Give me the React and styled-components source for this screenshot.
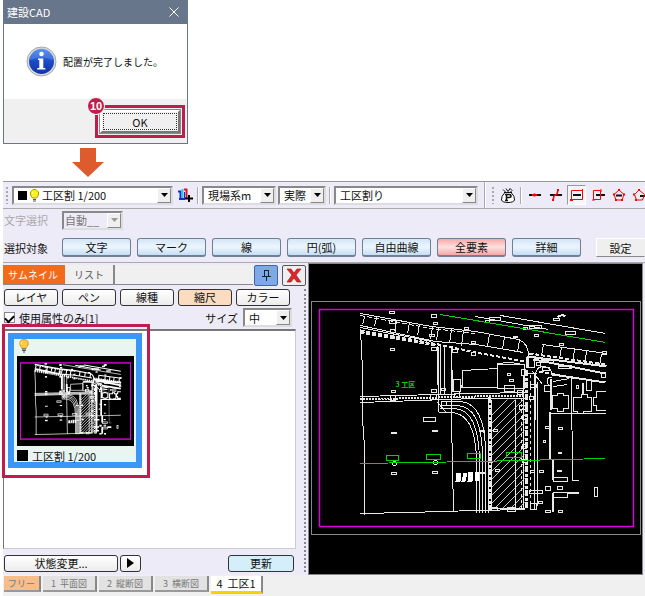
import styled, { createGlobalStyle } from "styled-components";

const GlobalStyle = createGlobalStyle`
  * {
    box-sizing: border-box;
  }
  body {
    margin: 0;
    background: #fff;
  }
  body, button, select, input {
    font-family: "Noto Sans CJK JP", "Liberation Sans", sans-serif;
    font-size: 11px;
    line-height: 14px;
    color: #111;
  }
`;

const Page = styled.main`
  display: flex;
  flex-direction: column;
  min-height: 100vh;
  padding-left: 3px;
  overflow: hidden;
`;

// Dialog
const Dialog = styled.section`
  width: 185px;
  border: 1px solid #67768a;
  border-top: 0;
  background: #fff;
`;

const TitleBar = styled.header`
  display: flex;
  align-items: center;
  justify-content: space-between;
  height: 24px;
  padding: 0 8px 0 3px;
  background: #67768a;
  color: #fff;
`;

const Title = styled.h1`
  margin: 0;
  font-size: 11px;
  font-weight: 400;
`;

const CloseButton = styled.button`
  display: flex;
  padding: 0;
  border: 0;
  background: none;
`;

const Message = styled.div`
  display: flex;
  align-items: center;
  gap: 6px;
  height: 75px;
  padding-left: 22px;
  font-size: 10px;
`;

const DialogFooter = styled.footer`
  display: flex;
  justify-content: flex-end;
  height: 44px;
  padding: 6px 2px 0 0;
  background: #f0f0f0;
`;

const Callout = styled.div`
  position: relative;
  width: 90px;
  height: 33px;
  padding: 2px;
  border: 3px solid #be1e4b;
`;

const StepBadge = styled.span`
  position: absolute;
  left: -11px;
  top: -11px;
  width: 18px;
  height: 18px;
  border: 1px solid #fff;
  border-radius: 50%;
  background: #be1e4b;
  color: #fff;
  font: bold 11px/16px "Liberation Sans", sans-serif;
  text-align: center;
`;

const OkButton = styled.button`
  width: 100%;
  height: 100%;
  padding: 0;
  border: 2px solid;
  border-color: #fff #777 #777 #fff;
  background: #f0f0f0;
  line-height: 12px;
  outline: 1px dotted #333;
  outline-offset: -4px;
  box-shadow: 0 0 0 1px #8a8a8a;
`;

const Arrow = styled.svg`
  display: block;
  margin: 4px 0 4px 69px;
`;

// Application window
const Window = styled.section`
  display: flex;
  flex: 1;
  flex-direction: column;
  border-top: 1px solid #999;
  background: #eeebf8;
`;

const Toolbar = styled.div`
  display: flex;
  align-items: center;
  height: 27px;
  padding-left: 3px;
  gap: 2px;
  border-bottom: 1px solid #aaa;
  overflow: hidden;
`;

const Grip = styled.span`
  flex: none;
  width: 2px;
  height: 17px;
  margin-right: 2px;
  background: repeating-linear-gradient(#aaa 0 2px, transparent 2px 4px);
`;

const Divider = styled.span`
  flex: none;
  width: 2px;
  height: ${(p) => (p.$tall ? "27px" : "17px")};
  margin: 0 ${(p) => (p.$tall ? "4px" : "1px")};
  border-left: 1px solid #aaa;
  border-right: 1px solid #fff;
`;

const ComboBox = styled.span`
  display: flex;
  flex: none;
  align-items: center;
  gap: 3px;
  position: relative;
  width: ${(p) => p.$width}px;
  height: 19px;
  padding-left: ${(p) => (p.$disabled ? 1 : 4)}px;
  border: 2px solid;
  border-color: #888 #ddd #ddd #888;
  background: ${(p) => (p.$disabled ? "#eeebf8" : "#fff")};
`;

const ComboSelect = styled.select`
  flex: 1;
  min-width: 0;
  height: 100%;
  padding: 0;
  border: 0;
  appearance: none;
  background: transparent;
  color: ${(p) => (p.disabled ? "#777" : "#111")};
  opacity: 1;
`;

const ComboArrow = styled.span`
  position: absolute;
  top: 0;
  right: 0;
  bottom: 0;
  display: flex;
  align-items: center;
  justify-content: center;
  width: 14px;
  border: 1px solid;
  border-color: #fff #888 #888 #fff;
  background: #efefef;
  pointer-events: none;
`;

const ToolButton = styled.button`
  display: flex;
  flex: none;
  align-items: center;
  justify-content: center;
  width: 19px;
  height: 20px;
  padding: 0;
  border: 1px solid;
  border-color: ${(p) => (p.$pressed ? "#999 #fff #fff #999" : "transparent")};
  background: ${(p) => (p.$pressed ? "#f6f5fb" : "none")};
`;

const OptionRow = styled.div`
  display: flex;
  align-items: center;
  height: 22px;
  padding-left: 1px;
`;

const RowLabel = styled.label`
  width: 58px;
  color: ${(p) => (p.$muted ? "#aaa" : "#111")};
`;

const TargetRow = styled.div`
  display: flex;
  align-items: center;
  height: 31px;
  padding: 2px 0 0 1px;
  overflow: hidden;
`;

const TargetList = styled.div`
  display: flex;
  flex: 1;
  gap: 6px;
`;

const TargetButton = styled.button`
  flex: none;
  width: 69px;
  height: 19px;
  padding: 0;
  border: 1px solid #6f7f94;
  border-bottom-width: 2px;
  border-radius: 3px;
  background: ${(p) =>
    p.$active
      ? "linear-gradient(#f8a9a9, #fde0e0 50%, #f7a6a6)"
      : "linear-gradient(#d3e6f8, #edf5fd 50%, #c4def6)"};
  line-height: 15px;
`;

const SettingsButton = styled.button`
  flex: none;
  width: 49px;
  height: 19px;
  padding: 0;
  border: 1px solid;
  border-color: #fff transparent #888 #fff;
  background: #efefef;
`;

const Workspace = styled.div`
  display: flex;
  flex: 1;
  border-top: 1px solid #aaa;
`;

// Attribute panel
const Panel = styled.aside`
  display: flex;
  flex: none;
  flex-direction: column;
  width: 305px;
  padding: 2px 2px 3px 0;
`;

const PanelHead = styled.div`
  display: flex;
  height: 20px;
`;

const TabStrip = styled.div`
  display: flex;
  flex: 1;
  margin-right: 1px;
  border-bottom: 1px solid #888;
  background: #f0f0f0;
`;

const PanelTab = styled.button`
  width: ${(p) => (p.$active ? 62 : 50)}px;
  padding: 0;
  border: 0;
  border-right: 2px solid ${(p) => (p.$active ? "#f26a1b" : "#888")};
  background: ${(p) => (p.$active ? "#f26a1b" : "#f0f0f0")};
  color: ${(p) => (p.$active ? "#fff" : "#555")};
  font-size: 10px;
`;

const HeadButton = styled.button`
  display: flex;
  align-items: center;
  justify-content: center;
  width: 24px;
  height: 21px;
  margin-right: 4px;
  padding: 0;
  border: 1px solid ${(p) => (p.$blue ? "#3f67a8" : "#555")};
  border-radius: 2px;
  background: ${(p) => (p.$blue ? "#7fa9e6" : "#eee")};
  &:last-child {
    margin-right: 0;
  }
`;

const PanelBody = styled.div`
  display: flex;
  flex: 1;
  flex-direction: column;
  margin-top: 4px;
  padding-right: 6px;
  border-right: 2px dotted #888;
`;

const FilterRow = styled.div`
  display: flex;
  gap: 4px;
  padding-left: 1px;
`;

const FilterButton = styled.button`
  width: ${(p) => p.$width || 54}px;
  height: 17px;
  padding: 0;
  border: 1px solid #333;
  border-radius: 3px;
  background: ${(p) => p.$fill || "linear-gradient(#fff, #ececec)"};
  line-height: 13px;
`;

const UsedRow = styled.div`
  display: flex;
  align-items: center;
  height: 23px;
  padding: 0 6px 0 1px;
`;

const CheckLabel = styled.label`
  display: flex;
  flex: 1;
  align-items: center;
  gap: 4px;
`;

const CheckBox = styled.input`
  display: grid;
  place-items: center;
  width: 11px;
  height: 11px;
  margin: 0;
  border: 1px solid #888;
  appearance: none;
  background: #fff;
  &:checked::before {
    content: "";
    width: 7px;
    height: 4px;
    border: solid #000;
    border-width: 0 0 2px 2px;
    transform: rotate(-45deg);
  }
`;

const SizeLabel = styled.label`
  margin-right: 5px;
`;

const Gallery = styled.div`
  position: relative;
  flex: 1;
  min-height: 220px;
  margin: 0 2px 6px 0;
  padding: 2px 0 0 4px;
  border: 1px solid #ccc;
  border-top: 2px solid #777;
  border-left-color: #777;
  background: #fff;
`;

const CardOutline = styled.div`
  position: absolute;
  left: -2px;
  top: -7px;
  width: 148px;
  height: 154px;
  border: 3px solid #be1e4b;
  pointer-events: none;
`;

const Card = styled.figure`
  width: 134px;
  height: 135px;
  margin: 0;
  padding: 0 2px 0 3px;
  border: 6px solid #3a97f8;
  background: #e9f5f1;
`;

const CardBulb = styled.div`
  height: 17px;
  padding-left: 2px;
`;

const Thumb = styled.div`
  height: 90px;
  padding: 6px 3px;
  background: #000;
`;

const Caption = styled.figcaption`
  display: flex;
  align-items: center;
  gap: 4px;
  height: 16px;
  padding-top: 3px;
`;

const Swatch = styled.span`
  flex: none;
  width: ${(p) => p.$size}px;
  height: ${(p) => p.$size}px;
  background: #000;
`;

const ActionRow = styled.div`
  display: flex;
  gap: 2px;
  padding: 0 4px 0 1px;
`;

const Spacer = styled.span`
  flex: 1;
`;

// Drawing area
const Viewport = styled.div`
  display: flex;
  flex: 1;
  min-width: 0;
  margin-right: 2px;
  border: 1px solid #888;
  background: #000;
`;

const Plan = styled.svg`
  display: block;
  width: 100%;
  height: 100%;
  overflow: hidden;
`;

const SheetTabs = styled.nav`
  display: flex;
  gap: 2px;
  height: 21px;
  padding: 1px 0 0 1px;
  background: #f0f0f0;
`;

const SheetTab = styled.button`
  width: ${(p) => p.$width || 54}px;
  height: ${(p) => (p.$active ? 18 : 16)}px;
  padding: 0;
  border: 0;
  border-right: 2px solid #888;
  border-bottom: ${(p) => (p.$active ? "3px solid #ffd000" : "2px solid #999")};
  background: ${(p) => p.$fill || "#e2e2e2"};
  color: ${(p) => (p.$active ? "#111" : "#777")};
  font-size: ${(p) => (p.$active ? 11 : 9)}px;
  line-height: 13px;
  white-space: pre;
`;

function Bulb({ size = 14 }) {
  return (
    <svg width={(size * 10) / 14} height={size} viewBox="0 0 10 14">
      <path d="M5 .5a4.300 4.300 0 0 1 4.300 4.200c0 2-1.800 3-2.100 4.800H2.800C2.500 7.700.700 6.700.700 4.700A4.300 4.300 0 0 1 5 .5z" fill="#ffcb3c" stroke="#b98416" strokeWidth=".7" />
      <path d="M3 2.500q-1.200 1-1 2.800" stroke="#fff7cf" fill="none" />
      <path d="M3 10h4M3 11.500h4M4 13h2" stroke="#555" />
    </svg>
  );
}

function LampOn() {
  return (
    <svg width="9" height="13" viewBox="0 0 9 13">
      <path d="M3 .5h3l2.500 2.500v3L6.500 9h-4L.5 6V3z" fill="#fff21a" stroke="#a89a00" />
      <path d="M2.500 3v2" stroke="#fff" />
      <path d="M3 10.500h3M3 12h3" stroke="#555" />
    </svg>
  );
}

function InfoIcon() {
  return (
    <svg width="31" height="31" viewBox="0 0 31 31">
      <defs>
        <linearGradient id="infoFill" x1="0" y1="0" x2="0" y2="1">
          <stop offset="0" stopColor="#4b86e8" />
          <stop offset=".5" stopColor="#1c4bc4" />
          <stop offset="1" stopColor="#1234a5" />
        </linearGradient>
      </defs>
      <circle cx="15.500" cy="15.500" r="14.500" fill="#dcdcdc" stroke="#a5a5a5" />
      <circle cx="15.500" cy="15.500" r="12.500" fill="url(#infoFill)" />
      <path d="M4 14a11.500 11.500 0 0 1 23 0q-11-5-23 0z" fill="#6d9df0" opacity=".4" />
      <circle cx="15.500" cy="8" r="2.300" fill="#fff" />
      <path d="M12 12.500h5.300v9.500h2v1.500h-8V22h2v-8h-1.300z" fill="#fff" />
    </svg>
  );
}

function Combo({ id, label, width, options, disabled, children }) {
  return (
    <ComboBox $width={width} $disabled={disabled}>
      {children}
      <ComboSelect id={id} aria-label={label} disabled={disabled}>
        {options.map((o) => (
          <option key={o}>{o}</option>
        ))}
      </ComboSelect>
      <ComboArrow>
        <svg width="7" height="4">
          <path d="M0 0h7L3.500 4z" fill={disabled ? "#999" : "#000"} />
        </svg>
      </ComboArrow>
    </ComboBox>
  );
}

const snapIcons = [
  {
    name: "線上",
    art: (
      <>
        <path d="M2 8h12" stroke="#111" strokeWidth="2" />
        <path d="M5 8h5M7.500 6.500v3" stroke="red" strokeWidth="2" />
      </>
    ),
  },
  {
    name: "交点",
    art: (
      <>
        <path d="M2 8h12" stroke="#111" strokeWidth="2" />
        <path d="M5 13l1-4 3-2 1-4" stroke="red" strokeWidth="1.500" />
        <path d="M9 2h2v2H9zM4 12h2v2H4z" fill="red" />
      </>
    ),
  },
  {
    name: "矩形内",
    pressed: true,
    art: (
      <>
        <path d="M4 8h8" stroke="#111" strokeWidth="2" />
        <path d="M2.500 3.500h11v9h-11z" stroke="red" />
        <path d="M13 2h1v3h-1zM1 12h3v2H1z" fill="red" />
      </>
    ),
  },
  {
    name: "矩形交差",
    art: (
      <>
        <path d="M6 8h9" stroke="#111" strokeWidth="2" />
        <path d="M3.500 3.500h7v9h-7zM11 2v3M2 13h3" stroke="red" />
      </>
    ),
  },
  {
    name: "多角形内",
    art: (
      <>
        <path d="M5 8.500h6" stroke="#111" strokeWidth="2" />
        <path d="M8 3L3 7.500l2 5.500h6l2-5.500z" stroke="red" />
        <path d="M7 2h2v2H7zM2 6.500h2v2H2zM12 6.500h2v2h-2zM4 12h2v2H4zM10 12h2v2h-2z" fill="red" />
      </>
    ),
  },
  {
    name: "多角形交差",
    art: (
      <>
        <path d="M8 9h8" stroke="#111" strokeWidth="2" />
        <path d="M7 3L2.500 7.500l2 5.500h6l2-5.500z" stroke="red" />
        <path d="M6 2h2v2H6zM1 6.500h2v2H1zM3 12h2v2H3z" fill="red" />
      </>
    ),
  },
];

// survey marks: x, y, width, height
const marks = [
  [70, 2, 5, 2], [112, 5, 5, 3], [70, 11, 6, 3], [114, 13, 4, 2], [71, 20, 5, 3],
  [71, 27, 4, 2], [71, 39, 4, 2], [110, 25, 5, 2], [112, 38, 5, 3], [112, 80, 5, 3],
  [122, 79, 4, 2], [133, 40, 5, 3], [145, 18, 4, 2], [152, 32, 4, 2], [152, 43, 4, 3],
  [72, 81, 4, 2], [71, 86, 5, 5], [111, 85, 6, 5], [122, 92, 5, 4], [104, 108, 12, 4],
  [134, 70, 7, 12], [135, 84, 5, 4], [72, 123, 5, 1], [113, 121, 5, 1], [72, 163, 5, 2],
  [113, 162, 5, 2], [166, 11, 4, 2], [170, 8, 11, 3], [204, 18, 4, 2], [210, 16, 12, 3],
  [215, 25, 4, 2], [234, 9, 6, 2], [246, 22, 10, 3], [194, 27, 4, 1], [240, 34, 4, 2],
  [188, 64, 3, 2], [190, 70, 4, 2], [207, 48, 8, 10], [202, 60, 4, 6], [223, 58, 7, 3],
  [217, 53, 4, 3], [239, 56, 13, 3], [222, 50, 12, 3], [283, 42, 4, 3], [282, 63, 4, 5],
  [257, 76, 2, 3], [263, 74, 1, 10], [267, 71, 5, 10], [185, 76, 10, 6], [198, 81, 5, 4],
  [211, 75, 6, 3], [225, 76, 6, 6], [239, 118, 4, 2], [226, 117, 4, 2], [224, 131, 2, 2],
  [239, 143, 3, 1], [211, 161, 4, 2], [220, 161, 4, 2], [238, 161, 4, 1], [210, 181, 13, 3],
  [226, 177, 5, 4], [238, 177, 5, 3], [219, 192, 4, 2], [226, 201, 5, 2], [239, 201, 4, 2],
  [211, 194, 6, 6], [174, 120, 4, 2], [176, 160, 4, 2], [160, 121, 5, 1], [161, 163, 5, 1],
  [200, 96, 8, 4], [210, 87, 4, 3], [188, 198, 8, 4], [172, 198, 6, 3], [275, 178, 3, 9],
  [234, 168, 14, 4], [234, 183, 14, 5], [203, 106, 5, 4], [203, 135, 4, 4], [203, 150, 5, 3],
];

const ties = [
  [44, 8, 15], [56, 8, 17], [76, 12, 22], [89, 13, 24], [99, 15, 26], [112, 17, 30],
  [118, 18, 31], [131, 20, 34], [143, 21, 37], [169, 25, 37], [184, 27, 40],
  [199, 30, 43], [223, 35, 47], [241, 38, 50], [254, 40, 53], [266, 42, 55], [281, 45, 57],
];

const hatches = Array.from({ length: 17 }, (_, i) => 84 + i * 8);

function SitePlan({ mono, id }) {
  const green = mono ? "#fff" : "#00d400";
  const hair = mono ? 2 : 1;
  const thin = mono ? 3 : 1;
  const thick = mono ? 5 : 2;
  return (
    <g fill="none" stroke={mono ? "#fff" : "#e8e8e8"} strokeWidth={thin} shapeRendering={mono ? "auto" : "crispEdges"}>
      <defs>
        <clipPath id={id}>
          <path d="M172 90h33v109h-33z" />
        </clipPath>
      </defs>
      <rect width="314" height="217" stroke="#d800d8" strokeWidth={mono ? 4 : 1.5} shapeRendering="auto" />
      <path d="M41 4L112 17 156 22 199 30Q209 34 209 46M41 16L116 32 156 35 204 43M41 18L112 32" />
      <path d="M208 47L287 57M214 50L286 64M233 65L286 73" strokeWidth={thick} />
      <path d="M223 35L287 44M206 56Q196 52 178 54M181 6L286 24M156 7L229 20" />
      <path d="M41 6L112 19 156 24" strokeDasharray="5 2" />
      <path d="M41 21L119 35 156 43 206 52M41 23L116 36M210 44L286 55M220 62L240 66" strokeWidth={thick} strokeDasharray="4 2" />
      {ties.map(([x, y1, y2]) => (
        <path key={x} d={`M${x + 1} ${y1}L${x - 1} ${y2}`} />
      ))}
      <g strokeWidth={hair}>
        <path d="M41 20L43 60 43 110 45 137 45 205M118 37L119 103M121 36V85M125 37V85M132 37V110L134 202" />
        <path d="M41 87L156 84 206 83M41 93L156 89 206 89" />
        <path d="M41 204L89 203 156 201 206 200" />
        <path d="M119 103H132Q156 104 157 150V203M120 99H135Q159 100 160 150V203M122 96H138Q162 97 163 145V203M123 92H141Q165 94 166 140V203M118 93L127 103" />
        <path d="M143 61L178 59V78H143zM178 55H205V79H178zM142 76L140 84" />
      </g>
      <path d="M118 37V75M132 60V82" strokeWidth={thick} />
      <path d="M41 90L156 87 206 86" strokeWidth={thick} strokeDasharray="2 1" />
      <g clipPath={`url(#${id})`} strokeWidth={hair} stroke={mono ? "#fff" : "#c4c4c4"} shapeRendering="auto">
        {hatches.map((y) => (
          <path key={y} d={`M170 ${y + 24}L208 ${y - 14}`} />
        ))}
      </g>
      <path d="M169 87V203M172 90V200M196 90V200M172 199H205M204 65V200" strokeWidth={hair} />
      <path d="M170 87V203M207 60V200" strokeWidth="3" strokeDasharray="6 2 3 1" />
      <path d="M202 88V199M211 65V196M172 90V196" strokeDasharray="3 3" />
      <path d="M215 65V200M218 72V196M205 64H217M231 104H286" />
      <path d="M252 68L253 171H259" strokeWidth="1" />
      <path d="M231 69V100M230 102V150M233 150V170M233 183V202M215 65V110M208 47V58" strokeWidth={thick} />
      <path d="M233 68Q226 66 229 76M215 70Q216 57 223 57T233 64M213 62L223 75" />
      <path d="M233 86H238V84H244V86H249V99H244V102H238V99H233zM254 88H262V85H268V88H272V102H264V104H258V102H254zM286 82H277V88H274V96H277V101H286M234 72L250 69M234 77L248 75" />
      <path d="M248 183H259M223 50H235M239 56H252M238 8Q242 4 246 7" strokeWidth={thick} />
      <g strokeWidth={hair}>
        {marks.map(([x, y, w, h]) => (
          <rect key={`${x}-${y}`} x={x} y={y} width={w} height={h} />
        ))}
        <circle cx="75" cy="154" r="2" />
        <circle cx="116" cy="153" r="2" />
      </g>
      <path d="M137 163h5l-1 9h-5zM144 163h4l-2 9h-4zM149 162h5l-1 10h-5zM155 162h4v9h-4z" fill="#fff" stroke="none" />
      <g stroke={green} strokeWidth={hair}>
        <path d="M121 5L156 11 286 33M41 154L156 152 286 149" />
        <path d="M67 146h12v5H67zM107 145h14v5h-14zM148 144h13v5h-13zM187 143h15v5h-15z" />
      </g>
      {!mono && (
        <text x="76" y="77" fill={green} stroke="none" fontSize="7" fontWeight="700">
          3 工区
        </text>
      )}
    </g>
  );
}

export default function App() {
  return (
    <>
      <GlobalStyle />
      <Page>
        <Dialog>
          <TitleBar>
            <Title>建設CAD</Title>
            <CloseButton aria-label="閉じる">
              <svg width="10" height="10" stroke="#fff">
                <path d="M.5.5l9 9M9.500.5l-9 9" />
              </svg>
            </CloseButton>
          </TitleBar>
          <Message>
            <InfoIcon />
            配置が完了しました。
          </Message>
          <DialogFooter>
            <Callout>
              <StepBadge>10</StepBadge>
              <OkButton>OK</OkButton>
            </Callout>
          </DialogFooter>
        </Dialog>

        <Arrow width="32" height="29" viewBox="0 0 32 29">
          <path d="M8 0h16v14h8L16 29 0 14h8z" fill="#de5b2e" />
        </Arrow>

        <Window>
          <Toolbar>
            <Grip />
            <Combo label="属性" width={161} options={["工区割 1/200"]}>
              <Swatch $size={9} />
              <LampOn />
            </Combo>
            <ToolButton aria-label="属性追加">
              <svg width="16" height="16" viewBox="0 0 16 16" fill="none">
                <path d="M3.500 12V3.500M1 4.500h2M2 12h6" stroke="#0a2fd8" strokeWidth="2" />
                <path d="M5.500 2v9" stroke="#30c8e8" strokeWidth="2" />
                <path d="M7 2.500h2.500V12" stroke="#e01020" strokeWidth="2" />
                <path d="M7.500 5v8" stroke="#0a2fd8" />
                <path d="M8 11.500h8M12 8v7" stroke="#000" strokeWidth="2" />
              </svg>
            </ToolButton>
            <Divider />
            <Combo label="座標系" width={74} options={["現場系m"]} />
            <Combo label="寸法" width={48} options={["実際"]} />
            <Divider />
            <Combo label="工区" width={144} options={["工区割り"]} />
            <Divider $tall />
            <Grip />
            <ToolButton aria-label="ポイント">
              <svg width="16" height="17" viewBox="0 0 16 17" fill="none" stroke="#111">
                <path d="M5 5.500Q1 9 1.500 13q1 2.500 6.500 2.500t6.500-2.500Q15 9 11 5.500z" fill="#fff" />
                <path d="M4 5.500h8M3 2.500l3 3M6 1.500l2 3 2-3 2 2-2 2" />
                <path d="M6.500 7.500v6M5 13.500h3M5 7.500h4q2 0 2 1.500t-2 1.500H7" strokeWidth="1.500" />
              </svg>
            </ToolButton>
            <Divider />
            {snapIcons.map((icon) => (
              <ToolButton key={icon.name} aria-label={icon.name} $pressed={icon.pressed}>
                <svg width="16" height="16" viewBox="0 0 16 16" fill="none">
                  {icon.art}
                </svg>
              </ToolButton>
            ))}
          </Toolbar>

          <OptionRow>
            <RowLabel $muted htmlFor="textSelect">文字選択</RowLabel>
            <Combo id="textSelect" width={61} options={["自動__"]} disabled />
          </OptionRow>

          <TargetRow>
            <RowLabel as="span">選択対象</RowLabel>
            <TargetList>
              {["文字", "マーク", "線", "円(弧)", "自由曲線", "全要素", "詳細"].map((name) => (
                <TargetButton key={name} $active={name === "全要素"}>
                  {name}
                </TargetButton>
              ))}
            </TargetList>
            <SettingsButton>設定</SettingsButton>
          </TargetRow>

          <Workspace>
            <Panel>
              <PanelHead>
                <TabStrip>
                  <PanelTab $active>サムネイル</PanelTab>
                  <PanelTab>リスト</PanelTab>
                </TabStrip>
                <HeadButton $blue aria-label="固定">
                  <svg width="9" height="13" fill="none" stroke="#123">
                    <path d="M2.500 1v6M6.500 1v6M2 1.500h5M0 7.500h9M4.500 8v4" />
                  </svg>
                </HeadButton>
                <HeadButton aria-label="パネルを閉じる">
                  <svg width="16" height="15" viewBox="0 0 16 15">
                    <path d="M1 1h4l3 4 3-4h4l-5 6 5 7h-4L8 10l-3 4H1l5-7z" fill="#e0262b" stroke="#8e1216" strokeWidth=".6" />
                  </svg>
                </HeadButton>
              </PanelHead>

              <PanelBody>
                <FilterRow>
                  <FilterButton>レイヤ</FilterButton>
                  <FilterButton>ペン</FilterButton>
                  <FilterButton>線種</FilterButton>
                  <FilterButton $fill="#fbdcc0">縮尺</FilterButton>
                  <FilterButton>カラー</FilterButton>
                </FilterRow>
                <UsedRow>
                  <CheckLabel>
                    <CheckBox type="checkbox" defaultChecked />
                    使用属性のみ[1]
                  </CheckLabel>
                  <SizeLabel htmlFor="size">サイズ</SizeLabel>
                  <Combo id="size" width={49} options={["中"]} />
                </UsedRow>

                <Gallery>
                  <Card>
                    <CardBulb>
                      <Bulb />
                    </CardBulb>
                    <Thumb>
                      <Plan viewBox="-1 -1 316 219">
                        <SitePlan mono id="thumbHatch" />
                      </Plan>
                    </Thumb>
                    <Caption>
                      <Swatch $size={11} />
                      工区割 1/200
                    </Caption>
                  </Card>
                  <CardOutline />
                </Gallery>

                <ActionRow>
                  <FilterButton $width={114}>状態変更...</FilterButton>
                  <FilterButton $width={21} aria-label="状態変更メニュー">
                    <svg width="7" height="10">
                      <path d="M0 0l7 5-7 5z" />
                    </svg>
                  </FilterButton>
                  <Spacer />
                  <FilterButton $width={66} $fill="#d5effa">更新</FilterButton>
                </ActionRow>
              </PanelBody>
            </Panel>

            <Viewport>
              <Plan viewBox="0 0 333 310">
                <rect x="2.500" y="37.500" width="329" height="233" fill="none" stroke="#888" shapeRendering="crispEdges" />
                <g transform="translate(10.500 45.500)">
                  <SitePlan id="planHatch" />
                </g>
              </Plan>
            </Viewport>
          </Workspace>

          <SheetTabs>
            <SheetTab $width={37} $fill="#f7bd8b">フリー</SheetTab>
            <SheetTab>1  平面図</SheetTab>
            <SheetTab>2  縦断図</SheetTab>
            <SheetTab>3  横断図</SheetTab>
            <SheetTab $active $width={52} $fill="#fff">4  工区1</SheetTab>
          </SheetTabs>
        </Window>
      </Page>
    </>
  );
}
